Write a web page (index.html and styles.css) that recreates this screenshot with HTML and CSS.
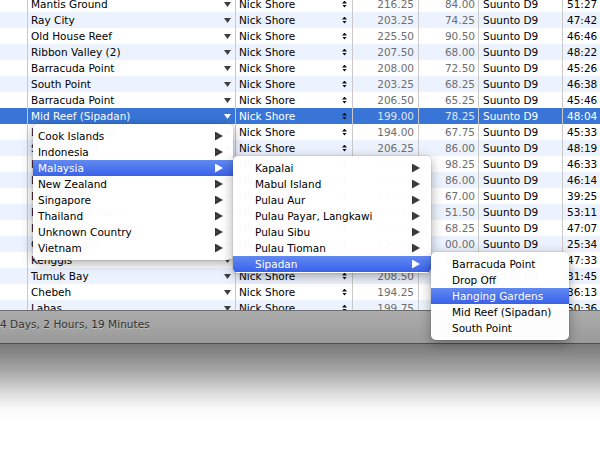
FILE: index.html
```html
<!DOCTYPE html>
<html>
<head>
<meta charset="utf-8">
<link rel="stylesheet" href="styles.css">
</head>
<body>
<div class="window">
  <div class="table">
    <div class="rows">
      <div class="row"><span class="c c1"></span><span class="c c2"><span>Mantis Ground</span><i class="dd"></i></span><span class="c c3"><span>Nick Shore</span><i class="st"></i></span><span class="c c4">216.25</span><span class="c c5">84.00</span><span class="c c6">Suunto D9</span><span class="c c7">51:27</span></div>
      <div class="row"><span class="c c1"></span><span class="c c2"><span>Ray City</span><i class="dd"></i></span><span class="c c3"><span>Nick Shore</span><i class="st"></i></span><span class="c c4">203.25</span><span class="c c5">74.25</span><span class="c c6">Suunto D9</span><span class="c c7">47:42</span></div>
      <div class="row"><span class="c c1"></span><span class="c c2"><span>Old House Reef</span><i class="dd"></i></span><span class="c c3"><span>Nick Shore</span><i class="st"></i></span><span class="c c4">225.50</span><span class="c c5">90.50</span><span class="c c6">Suunto D9</span><span class="c c7">46:46</span></div>
      <div class="row"><span class="c c1"></span><span class="c c2"><span>Ribbon Valley (2)</span><i class="dd"></i></span><span class="c c3"><span>Nick Shore</span><i class="st"></i></span><span class="c c4">207.50</span><span class="c c5">68.00</span><span class="c c6">Suunto D9</span><span class="c c7">48:22</span></div>
      <div class="row"><span class="c c1"></span><span class="c c2"><span>Barracuda Point</span><i class="dd"></i></span><span class="c c3"><span>Nick Shore</span><i class="st"></i></span><span class="c c4">208.00</span><span class="c c5">72.50</span><span class="c c6">Suunto D9</span><span class="c c7">45:26</span></div>
      <div class="row"><span class="c c1"></span><span class="c c2"><span>South Point</span><i class="dd"></i></span><span class="c c3"><span>Nick Shore</span><i class="st"></i></span><span class="c c4">203.25</span><span class="c c5">68.25</span><span class="c c6">Suunto D9</span><span class="c c7">46:38</span></div>
      <div class="row"><span class="c c1"></span><span class="c c2"><span>Barracuda Point</span><i class="dd"></i></span><span class="c c3"><span>Nick Shore</span><i class="st"></i></span><span class="c c4">206.50</span><span class="c c5">65.25</span><span class="c c6">Suunto D9</span><span class="c c7">45:46</span></div>
      <div class="row sel"><span class="c c1"></span><span class="c c2"><span>Mid Reef (Sipadan)</span><i class="dd"></i></span><span class="c c3"><span>Nick Shore</span><i class="st"></i></span><span class="c c4">199.00</span><span class="c c5">78.25</span><span class="c c6">Suunto D9</span><span class="c c7">48:04</span></div>
      <div class="row"><span class="c c1"></span><span class="c c2"><span>Lankayan Island</span><i class="dd"></i></span><span class="c c3"><span>Nick Shore</span><i class="st"></i></span><span class="c c4">194.00</span><span class="c c5">67.75</span><span class="c c6">Suunto D9</span><span class="c c7">45:33</span></div>
      <div class="row"><span class="c c1"></span><span class="c c2"><span>Sipadan Wall</span><i class="dd"></i></span><span class="c c3"><span>Nick Shore</span><i class="st"></i></span><span class="c c4">206.25</span><span class="c c5">86.00</span><span class="c c6">Suunto D9</span><span class="c c7">48:19</span></div>
      <div class="row"><span class="c c1"></span><span class="c c2"><span>Hanging Gardens</span><i class="dd"></i></span><span class="c c3"><span>Nick Shore</span><i class="st"></i></span><span class="c c4">210.00</span><span class="c c5">98.25</span><span class="c c6">Suunto D9</span><span class="c c7">46:33</span></div>
      <div class="row"><span class="c c1"></span><span class="c c2"><span>Lobster Lair</span><i class="dd"></i></span><span class="c c3"><span>Nick Shore</span><i class="st"></i></span><span class="c c4">201.75</span><span class="c c5">86.00</span><span class="c c6">Suunto D9</span><span class="c c7">46:14</span></div>
      <div class="row"><span class="c c1"></span><span class="c c2"><span>Drop Off</span><i class="dd"></i></span><span class="c c3"><span>Nick Shore</span><i class="st"></i></span><span class="c c4">198.50</span><span class="c c5">67.00</span><span class="c c6">Suunto D9</span><span class="c c7">39:25</span></div>
      <div class="row"><span class="c c1"></span><span class="c c2"><span>Hanging Gardens</span><i class="dd"></i></span><span class="c c3"><span>Nick Shore</span><i class="st"></i></span><span class="c c4">192.25</span><span class="c c5">51.50</span><span class="c c6">Suunto D9</span><span class="c c7">53:11</span></div>
      <div class="row"><span class="c c1"></span><span class="c c2"><span>Kapalai House Reef</span><i class="dd"></i></span><span class="c c3"><span>Nick Shore</span><i class="st"></i></span><span class="c c4">204.00</span><span class="c c5">68.25</span><span class="c c6">Suunto D9</span><span class="c c7">47:07</span></div>
      <div class="row"><span class="c c1"></span><span class="c c2"><span>Chinese Reef</span><i class="dd"></i></span><span class="c c3"><span>Nick Shore</span><i class="st"></i></span><span class="c c4">196.75</span><span class="c c5">00.00</span><span class="c c6">Suunto D9</span><span class="c c7">25:34</span></div>
      <div class="row"><span class="c c1"></span><span class="c c2"><span>Kenggis</span><i class="dd"></i></span><span class="c c3"><span>Nick Shore</span><i class="st"></i></span><span class="c c4">205.50</span><span class="c c5">80.25</span><span class="c c6">Suunto D9</span><span class="c c7">47:33</span></div>
      <div class="row"><span class="c c1"></span><span class="c c2"><span>Tumuk Bay</span><i class="dd"></i></span><span class="c c3"><span>Nick Shore</span><i class="st"></i></span><span class="c c4">208.50</span><span class="c c5">72.00</span><span class="c c6">Suunto D9</span><span class="c c7">31:45</span></div>
      <div class="row"><span class="c c1"></span><span class="c c2"><span>Chebeh</span><i class="dd"></i></span><span class="c c3"><span>Nick Shore</span><i class="st"></i></span><span class="c c4">194.25</span><span class="c c5">64.50</span><span class="c c6">Suunto D9</span><span class="c c7">36:13</span></div>
      <div class="row"><span class="c c1"></span><span class="c c2"><span>Labas</span><i class="dd"></i></span><span class="c c3"><span>Nick Shore</span><i class="st"></i></span><span class="c c4">199.75</span><span class="c c5">70.25</span><span class="c c6">Suunto D9</span><span class="c c7">50:36</span></div>
    </div>
  </div>
  <div class="status">4 Days, 2 Hours, 19 Minutes</div>
</div>
<div class="shade"></div>

<div class="menu m1">
  <div class="item"><span>Cook Islands</span><i class="ar"></i></div>
  <div class="item"><span>Indonesia</span><i class="ar"></i></div>
  <div class="item hi"><span>Malaysia</span><i class="ar"></i></div>
  <div class="item"><span>New Zealand</span><i class="ar"></i></div>
  <div class="item"><span>Singapore</span><i class="ar"></i></div>
  <div class="item"><span>Thailand</span><i class="ar"></i></div>
  <div class="item"><span>Unknown Country</span><i class="ar"></i></div>
  <div class="item"><span>Vietnam</span><i class="ar"></i></div>
</div>

<div class="menu m2">
  <div class="item"><span>Kapalai</span><i class="ar"></i></div>
  <div class="item"><span>Mabul Island</span><i class="ar"></i></div>
  <div class="item"><span>Pulau Aur</span><i class="ar"></i></div>
  <div class="item"><span>Pulau Payar, Langkawi</span><i class="ar"></i></div>
  <div class="item"><span>Pulau Sibu</span><i class="ar"></i></div>
  <div class="item"><span>Pulau Tioman</span><i class="ar"></i></div>
  <div class="item hi"><span>Sipadan</span><i class="ar"></i></div>
</div>

<div class="menu m3">
  <div class="item"><span>Barracuda Point</span></div>
  <div class="item"><span>Drop Off</span></div>
  <div class="item hi"><span>Hanging Gardens</span></div>
  <div class="item"><span>Mid Reef (Sipadan)</span></div>
  <div class="item"><span>South Point</span></div>
</div>
</body>
</html>
```

FILE: styles.css
```css
html, body {
  margin: 0;
  padding: 0;
}
body {
  width: 600px;
  height: 450px;
  overflow: hidden;
  background: #fff;
  font-family: "DejaVu Sans", "Liberation Sans", sans-serif;
  font-size: 10.5px;
  color: #000;
  position: relative;
}
.window {
  display: flex;
  flex-direction: column;
}
.table {
  height: 310px;
  overflow: hidden;
}
.rows {
  margin-top: -4px;
}
.row {
  display: grid;
  grid-template-columns: 28px 208px 117px 66px 60px 84px 1fr;
  height: 16px;
  line-height: 16px;
  background: #fff;
  white-space: nowrap;
}
.row:nth-child(even) {
  background: #edf3fe;
}
.row.sel {
  background: #3875d7;
  color: #fff;
}
.c {
  box-sizing: border-box;
  border-right: 1px solid #c9c9c9;
  overflow: hidden;
  padding: 0 4px;
}
.c7 {
  border-right: none;
}
.c2, .c3 {
  display: flex;
  align-items: center;
  justify-content: space-between;
  padding-left: 3px;
  padding-right: 4px;
}
.c4 {
  text-align: right;
  color: #6e6e6e;
  padding-right: 4px;
}
.c5 {
  text-align: right;
  color: #6e6e6e;
  padding-right: 3px;
}
.sel .c4, .sel .c5 {
  color: #dfe6f3;
}
.c6, .c7 {
  padding-left: 4px;
}
.dd {
  display: block;
  width: 7px;
  height: 5px;
  margin-top: 1px;
  background: #3e3e3e;
  clip-path: polygon(0 0, 100% 0, 50% 100%);
}
.sel .dd {
  background: #fff;
}
.st {
  display: flex;
  flex-direction: column;
  gap: 1px;
  width: 5px;
  margin-right: 1px;
}
.st::before, .st::after {
  content: "";
  display: block;
  width: 5px;
  height: 3px;
  background: #111;
}
.st::before {
  clip-path: polygon(50% 0, 100% 100%, 0 100%);
}
.st::after {
  clip-path: polygon(0 0, 100% 0, 50% 100%);
}
.status {
  height: 32px;
  border-top: 1px solid #6c6c6c;
  border-bottom: 1px solid #505050;
  background: linear-gradient(#acacac, #9a9a9a);
  line-height: 26px;
  color: #303030;
  text-shadow: 0 1px 0 rgba(255, 255, 255, 0.35);
  white-space: nowrap;
  font-size: 10.5px;
  letter-spacing: 0.05px;
}
.shade {
  height: 106px;
  background: linear-gradient(#7b7b7b 0, #858585 8px, #a9a9a9 28px, #dadada 48px, #f8f8f8 64px, #fff 76px);
}
.menu {
  position: absolute;
  background: rgba(255, 255, 255, 0.975);
  border-radius: 5px;
  box-shadow: 0 3px 12px rgba(0, 0, 0, 0.35), 0 0 0 1px rgba(0, 0, 0, 0.06);
  padding: 4px 0;
  box-sizing: border-box;
  overflow: hidden;
}
.item {
  height: 16px;
  line-height: 16px;
  display: flex;
  align-items: center;
  justify-content: space-between;
  white-space: nowrap;
}
.item.hi {
  background: linear-gradient(#6189f2, #3a62e8);
  color: #fff;
}
.ar {
  display: block;
  width: 8px;
  height: 9px;
  background: #3a3a3a;
  clip-path: polygon(0 0, 100% 50%, 0 100%);
}
.hi .ar {
  background: #fff;
}
.m1 {
  left: 33px;
  top: 124px;
  width: 200px;
  height: 136px;
}
.m1 .item {
  padding: 0 10px 0 5px;
}
.m2 {
  left: 233px;
  top: 156px;
  width: 198px;
  height: 117px;
  padding-bottom: 1px;
}
.m2 .item {
  padding: 0 11px 0 22px;
}
.m3 {
  left: 431px;
  top: 252px;
  width: 138px;
  height: 88px;
}
.m3 .item {
  padding: 0 8px 0 21px;
}
```
